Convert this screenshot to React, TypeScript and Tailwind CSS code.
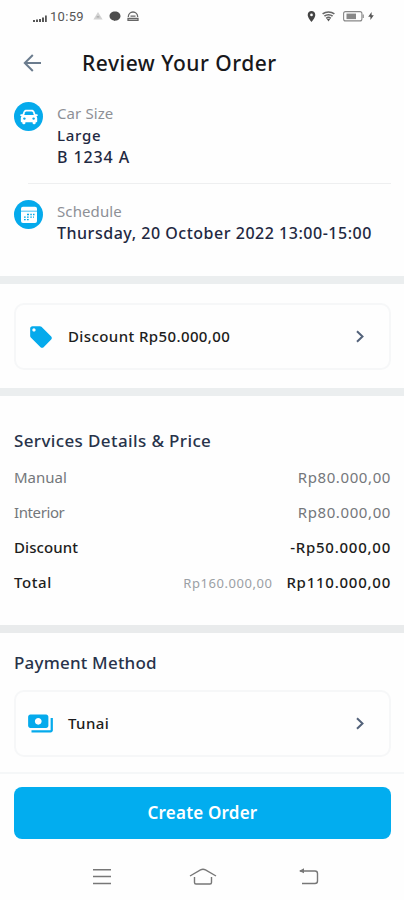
import type { ReactNode } from "react";
import { MdLocalOffer, MdPayments, MdLocationOn } from "react-icons/md";

type PriceRow = { label: string; value: string; bold?: boolean; old?: string; labelClass: string; valueClass: string };

const priceRows: PriceRow[] = [
  { label: "Manual", value: "Rp80.000,00", labelClass: "", valueClass: "tracking-[0.6px]" },
  { label: "Interior", value: "Rp80.000,00", labelClass: "tracking-[-0.4px]", valueClass: "tracking-[0.6px]" },
  { label: "Discount", value: "-Rp50.000,00", bold: true, labelClass: "tracking-[0.1px]", valueClass: "tracking-[0.75px]" },
  { label: "Total", value: "Rp110.000,00", old: "Rp160.000,00", bold: true, labelClass: "tracking-[0.6px]", valueClass: "tracking-[0.75px]" },
];

function StatusBar() {
  return (
    <div className="flex h-8 items-center pl-[33px] pr-[30px] text-[#555]">
      <svg className="mt-[5px] h-[7px] w-[14px]" viewBox="0 0 14 7" fill="currentColor">
        <path d="M0 5h2v2H0zM3 4.5h2V7H3zM6 4h2v3H6zM9 2.5h2V7H9zM12 .5h1.8V7H12z" />
      </svg>
      <span className="ml-[3px] w-[35px] font-['Roboto'] text-[13px] leading-none tracking-[0.3px]">10:59</span>
      <svg className="ml-2 h-[8px] w-[10px]" viewBox="0 0 10 8" fill="#d2d2d2">
        <path d="M5 0l4.6 7.4H.4z" />
        <path d="M3.7 4.2h2.6v1.3H3.7z" fill="#aaa" />
      </svg>
      <svg className="ml-[6px] h-[11px] w-[12px]" viewBox="0 0 12 11" fill="#4d4d4d">
        <path d="M6 .5c3.2 0 5.5 1.9 5.5 4.6S9.2 9.5 6.8 9.6L5.5 10.1 4.9 9.5C2.3 9.2.5 7.6.5 5.1.5 2.4 2.8.5 6 .5z" />
      </svg>
      <svg className="ml-[6px] h-[11px] w-[12px]" viewBox="0 0 12 11" fill="none" stroke="#666">
        <path d="M1.3 6C1.3 3 3.4 1 6 1s4.700 2 4.700 5" strokeWidth="1.3" />
        <path d="M3.5 5.200h5M1 7.500h10v1.800H1z" strokeWidth="1.3" />
      </svg>
      <MdLocationOn className="ml-auto size-[13px] text-[#444]" />
      <svg className="ml-[4px] h-[11px] w-[13px]" viewBox="0 0 13 11" fill="none" stroke="#666" strokeWidth="1.6">
        <path d="M.6 2.800C4 .3 9 .3 12.400 2.800M2.400 5.200c2.300-2 5.900-2 8.200 0M4.200 7.400c1.400-1.200 3.200-1.200 4.600 0" />
        <path d="M4.800 8.100h3.400L6.500 10.500z" fill="#555" stroke="none" />
      </svg>
      <svg className="ml-[8px] h-[11px] w-[21px]" viewBox="0 0 21 11" fill="none">
        <rect x=".6" y=".6" width="18.3" height="9.3" rx="2" stroke="#888" strokeWidth="1.1" />
        <rect x="3.5" y="2.6" width="9.5" height="5.5" fill="#888" />
        <path d="M20.2 3.5v3.6" stroke="#888" strokeWidth="1.2" />
      </svg>
      <svg className="ml-[4px] h-[10px] w-[6px]" viewBox="0 0 6 10" fill="#555">
        <path d="M3.6 1v3.200H5.800L2.400 9V5.700H.2z" />
      </svg>
    </div>
  );
}

function CarIcon() {
  return (
    <svg className="h-[16px] w-[18px]" viewBox="0 0 18 16">
      <path
        d="M6.300 .8h5.400c1.300 0 2.200.5 2.700 1.600L15.500 5.300h1.400c.5 0 .9.4.9.900s-.4.900-.9.900h-.5c.5.600.8 1.300.8 2.100v3c0 .6-.5 1.100-1.100 1.100h-.4v.8c0 .6-.5 1.100-1.100 1.100h-.9c-.6 0-1.100-.5-1.100-1.100v-.8H5.400v.8c0 .6-.5 1.100-1.100 1.100h-.9c-.6 0-1.100-.5-1.100-1.100v-.8h-.4c-.6 0-1.100-.5-1.100-1.100v-3c0-.8.3-1.500.8-2.100h-.5c-.5 0-.9-.4-.9-.900s.4-.900.9-.900h1.400L3.600 2.400C4.100 1.300 5 .8 6.300 .8z"
        fill="white"
      />
      <path d="M6.300 2.600h5.400q.8 0 1.100.7l1 2.700H4.200l1-2.700q.3-.7 1.100-.7z" fill="#05aaec" />
      <circle cx="4.400" cy="9.600" r="1.200" fill="#05aaec" />
      <circle cx="13.600" cy="9.600" r="1.200" fill="#05aaec" />
    </svg>
  );
}

function CalendarIcon() {
  return (
    <svg className="size-[18px]" viewBox="0 0 18 18" fill="none">
      <path d="M3 .8h12a2 2 0 0 1 2 2v2H1v-2a2 2 0 0 1 2-2z" fill="white" />
      <path d="M1 5.600h16V15a2 2 0 0 1-2 2H3a2 2 0 0 1-2-2z" fill="white" />
      <path d="M7 8.500h2M10.300 8.500h1.500M13 8.500h1.500M4 11.100h1.700M7 11.100h1.700M10.300 11.100h1.500M13 11.100h1M4 13.700h1.700M7 13.700h1.700" stroke="#03a9e8" strokeWidth="1.3" />
    </svg>
  );
}

function Chevron() {
  return (
    <svg className="mr-6 mb-px h-[13px] w-[10px]" viewBox="0 0 10 13" fill="none" stroke="#53627a" strokeWidth="2">
      <path d="M2 1.200l5.500 5.300L2 11.800" />
    </svg>
  );
}

function OptionCard({ icon, children }: { icon: ReactNode; children: ReactNode }) {
  return (
    <button className="flex h-[67px] w-full items-center rounded-[10px] border-2 border-[#f6f7f8] pl-3 text-left text-[15px] font-medium text-[#1d1d20]">
      <span className="flex w-10 shrink-0 text-[#05aaec]">{icon}</span>
      <span className="flex-1 pb-px tracking-[0.4px]">{children}</span>
      <Chevron />
    </button>
  );
}

export default function App() {
  return (
    <div className="flex h-[900px] w-full max-w-[404px] flex-col overflow-hidden bg-[#fefefe] font-['Noto_Sans','Open_Sans',sans-serif] text-[15px] whitespace-nowrap">
      <StatusBar />

      <header className="flex h-[62px] items-center pl-[23px]">
        <svg className="h-[18px] w-[19px]" viewBox="0 0 19 18" fill="none" stroke="#6b7c8e" strokeWidth="2">
          <path d="M18 9H2M9.800 1L1.800 9l8 8" />
        </svg>
        <h1 className="ml-10 pt-0.5 text-[21px] font-medium tracking-[0.5px] text-[#18181b]">Review Your Order</h1>
      </header>

      <section className="h-[182px] shrink-0 pr-[13px] pl-[14px]">
        <div className="flex h-[89px] pt-2">
          <span className="flex size-[29px] items-center justify-center rounded-full bg-[#05aaec]">
            <CarIcon />
          </span>
          <div className="ml-[14px] leading-[22px]">
            <p className="tracking-[0.1px] text-[#8d9096]">Car Size</p>
            <p className="font-medium tracking-[0.7px] text-[#1f2942]">Large</p>
            <p className="text-[16px] font-medium tracking-[0.9px] text-[#1f2942]">B 1234 A</p>
          </div>
        </div>
        <div className="ml-[14px] h-px bg-[#eeeff0]" />
        <div className="flex pt-4">
          <span className="flex size-[29px] items-center justify-center rounded-full bg-[#05aaec]">
            <CalendarIcon />
          </span>
          <div className="ml-[14px] leading-[22px]">
            <p className="tracking-[0.1px] text-[#8d9096]">Schedule</p>
            <p className="text-[16px] font-medium tracking-[0.52px] text-[#1f2942]">Thursday, 20 October 2022 13:00-15:00</p>
          </div>
        </div>
      </section>

      <section className="h-[112px] shrink-0 border-t-8 border-[#ebeeef] pt-[19px] pr-[13px] pl-[14px]">
        <OptionCard icon={<MdLocalOffer className="size-[26px]" />}>Discount Rp50.000,00</OptionCard>
      </section>

      <section className="h-[237px] shrink-0 border-t-8 border-[#ebeeef] pt-[33px] pr-[13px] pl-[14px]">
        <h2 className="text-[17px] leading-6 font-medium tracking-[0.38px] text-[#28334a]">Services Details &amp; Price</h2>
        <div className="mt-[7px]">
          {priceRows.map((row, i) => (
            <div key={i} className={`flex h-[35px] items-center ${row.bold ? "font-medium text-[#1d1d20]" : "text-[#74777b]"}`}>
              <span className={row.labelClass}>{row.label}</span>
              {row.old && <span className="ml-auto pt-[3px] text-[13px] font-normal tracking-[0.55px] text-[#9ba0a5]">{row.old}</span>}
              <span className={`${row.old ? "ml-[14px]" : "ml-auto"} ${row.valueClass}`}>{row.value}</span>
            </div>
          ))}
        </div>
      </section>

      <section className="h-[147px] shrink-0 border-t-8 border-[#e9ebec] pt-[18px] pr-[13px] pl-[14px]">
        <h2 className="mb-[15px] text-[17px] leading-6 font-medium tracking-[0.2px] text-[#28334a]">Payment Method</h2>
        <OptionCard icon={<MdPayments className="-ml-px size-[27px]" />}>Tunai</OptionCard>
      </section>

      <footer className="flex h-[128px] shrink-0 flex-col border-t-2 border-[#f5f7f8] pt-[13px] pr-[13px] pl-[14px]">
        <button className="h-[52px] rounded-lg bg-[#02adef] text-[17px] font-semibold tracking-[0.2px] text-white">Create Order</button>
        <nav className="mt-[29px] flex h-[18px] items-start pl-[78px] text-[#777]">
          <svg className="h-[18px] w-[20px]" viewBox="0 0 20 18" fill="none" stroke="currentColor" strokeWidth="1.4">
            <path d="M1 1.700h18M1 8.500h18M1 15.500h18" />
          </svg>
          <svg className="ml-[77px] h-[18px] w-[28px]" viewBox="0 0 28 18" fill="none" stroke="currentColor" strokeWidth="1.4">
            <path d="M1 8L11.500 1.800Q14 .7 16.500 1.800L27 8M5.500 9v5.500q0 1.500 1.500 1.500h14q1.500 0 1.500-1.500V9" />
          </svg>
          <svg className="ml-[81px] h-[18px] w-[21px]" viewBox="0 0 21 18" fill="none" stroke="currentColor" strokeWidth="1.4">
            <path d="M2 3h15q2.500 0 2.500 2.500v7.500q0 2.500-2.500 2.500H4" />
            <path d="M1 3L6 .3v5z" fill="currentColor" stroke="none" />
          </svg>
        </nav>
      </footer>
    </div>
  );
}
